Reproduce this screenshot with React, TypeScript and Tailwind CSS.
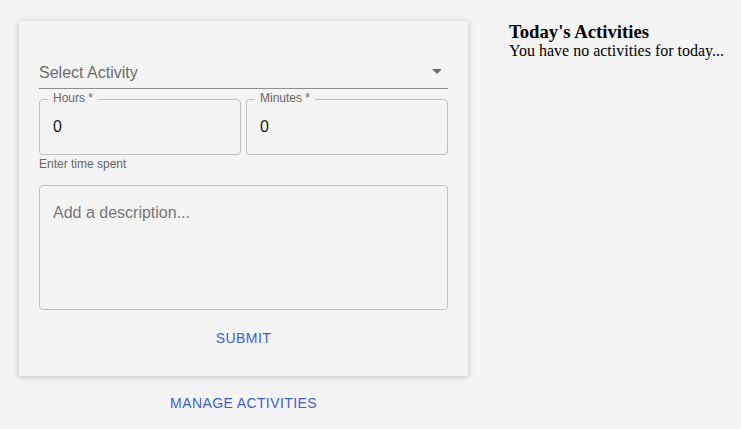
import { useState } from 'react';

function OutlinedNumber({ label, value }: { label: string; value: string }) {
  return (
    <div className="relative flex-1">
      <div className="h-[56px] rounded-[4px] border border-[#c0c0c0] flex items-center px-[13px]">
        <input
          defaultValue={value}
          className="w-full bg-transparent outline-none text-[16px] text-[#1a1a1a]"
        />
      </div>
      <span className="absolute left-[9px] top-[-8px] bg-[#f4f4f4] px-[5px] text-[12px] leading-[14px] text-[#666]">
        {label} *
      </span>
    </div>
  );
}

export default function App() {
  const [desc, setDesc] = useState('');
  return (
    <div className="min-h-[429px] bg-[#f4f4f4] flex items-start font-['Liberation_Sans',Arial,sans-serif]">
      <div className="ml-[19px] mt-[21px] w-[449px] flex flex-col items-center">
        <div className="w-full bg-[#f4f4f4] shadow-[0_1px_6px_rgba(0,0,0,0.22)] px-[20px] pt-[20px] pb-[20px] flex flex-col">
          <div className="h-[48px] border-b border-[#8c8c8c] flex items-end pb-[6px] pr-[6px]">
            <span className="flex-1 text-[16px] leading-[19px] text-[#6b6b6b]">Select Activity</span>
            <svg width="10" height="5" viewBox="0 0 10 5" className="mb-[8px]">
              <path d="M0 0h10L5 5z" fill="#6b6b6b" />
            </svg>
          </div>
          <div className="mt-[10px] flex gap-[5px]">
            <OutlinedNumber label="Hours" value="0" />
            <OutlinedNumber label="Minutes" value="0" />
          </div>
          <p className="mt-[2px] text-[12px] leading-[14px] text-[#666]">Enter time spent</p>
          <textarea
            value={desc}
            onChange={(e) => setDesc(e.target.value)}
            placeholder="Add a description..."
            className="mt-[14px] h-[125px] resize-none rounded-[4px] border border-[#c0c0c0] bg-transparent px-[13px] pt-[17px] text-[16px] leading-[20px] outline-none placeholder:text-[#777]"
          />
          <button className="mt-[10px] self-center h-[36px] px-[8px] text-[14px] uppercase tracking-[0.4px] text-[#3b5fd9]">
            Submit
          </button>
        </div>
        <button className="mt-[9px] h-[36px] px-[8px] text-[14px] uppercase tracking-[0.4px] text-[#3b5fd9]">
          Manage Activities
        </button>
      </div>
      <div className="ml-[41px] mt-[22px] font-['Liberation_Serif',serif] text-black">
        <h2 className="text-[18.7px] font-bold leading-[20px]">Today's Activities</h2>
        <p className="text-[16px] leading-[18px]">You have no activities for today...</p>
      </div>
    </div>
  );
}
